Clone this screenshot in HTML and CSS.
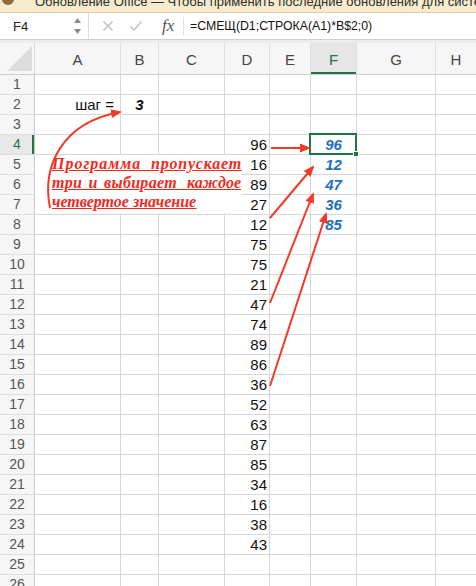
FILE: index.html
```html
<!DOCTYPE html>
<html lang="ru">
<head>
<meta charset="utf-8">
<title>Excel</title>
<link rel="stylesheet" href="styles.css">
</head>
<body>
<div class="notice"><span class="ndot"></span><span class="ntext">Обновление Office — Чтобы применить последние обновления для системы безопасности</span></div>
<div class="fbar">
  <div class="namebox">
    <span class="nametext">F4</span>
    <svg class="spin" width="9" height="18" viewBox="0 0 9 18"><path d="M1 6 L4.5 1 L8 6 Z" fill="#8a8a8a"/><path d="M1 12 L4.5 17 L8 12 Z" fill="#8a8a8a"/></svg>
  </div>
  <div class="ficons">
    <svg width="12" height="12" viewBox="0 0 12 12"><path d="M1.5 1.5 L10.5 10.5 M10.5 1.5 L1.5 10.5" stroke="#c4c4c4" stroke-width="1.6" fill="none"/></svg>
    <svg width="14" height="12" viewBox="0 0 14 12"><path d="M1.5 6.5 L5 10 L12.5 1.5" stroke="#c4c4c4" stroke-width="1.6" fill="none"/></svg>
    <span class="fx">fx</span>
  </div>
  <div class="formula">=СМЕЩ(D1;СТРОКА(А1)*B$2;0)</div>
</div>
<div class="gap"></div>
<div class="sheet">
  <div class="corner"><svg width="34" height="31" viewBox="0 0 34 31"><path d="M7 28 L32 3 L32 28 Z" fill="#dcdcdc"/></svg></div>
  <div class="ch">A</div><div class="ch">B</div><div class="ch">C</div><div class="ch">D</div><div class="ch">E</div><div class="ch selc">F</div><div class="ch">G</div><div class="ch">H</div>

  <div class="rh">1</div><div class="c"></div><div class="c"></div><div class="c"></div><div class="c"></div><div class="c"></div><div class="c"></div><div class="c"></div><div class="c"></div>
  <div class="rh">2</div><div class="c n step">шаг =</div><div class="c k">3</div><div class="c"></div><div class="c"></div><div class="c"></div><div class="c"></div><div class="c"></div><div class="c"></div>
  <div class="rh">3</div><div class="c"></div><div class="c"></div><div class="c"></div><div class="c"></div><div class="c"></div><div class="c"></div><div class="c"></div><div class="c"></div>
  <div class="rh selr">4</div><div class="c"></div><div class="c"></div><div class="c"></div><div class="c n">96</div><div class="c"></div><div class="c f">96</div><div class="c"></div><div class="c"></div>
  <div class="rh">5</div><div class="c"></div><div class="c"></div><div class="c"></div><div class="c n">16</div><div class="c"></div><div class="c f">12</div><div class="c"></div><div class="c"></div>
  <div class="rh">6</div><div class="c"></div><div class="c"></div><div class="c"></div><div class="c n">89</div><div class="c"></div><div class="c f">47</div><div class="c"></div><div class="c"></div>
  <div class="rh">7</div><div class="c"></div><div class="c"></div><div class="c"></div><div class="c n">27</div><div class="c"></div><div class="c f">36</div><div class="c"></div><div class="c"></div>
  <div class="rh">8</div><div class="c"></div><div class="c"></div><div class="c"></div><div class="c n">12</div><div class="c"></div><div class="c f">85</div><div class="c"></div><div class="c"></div>
  <div class="rh">9</div><div class="c"></div><div class="c"></div><div class="c"></div><div class="c n">75</div><div class="c"></div><div class="c"></div><div class="c"></div><div class="c"></div>
  <div class="rh">10</div><div class="c"></div><div class="c"></div><div class="c"></div><div class="c n">75</div><div class="c"></div><div class="c"></div><div class="c"></div><div class="c"></div>
  <div class="rh">11</div><div class="c"></div><div class="c"></div><div class="c"></div><div class="c n">21</div><div class="c"></div><div class="c"></div><div class="c"></div><div class="c"></div>
  <div class="rh">12</div><div class="c"></div><div class="c"></div><div class="c"></div><div class="c n">47</div><div class="c"></div><div class="c"></div><div class="c"></div><div class="c"></div>
  <div class="rh">13</div><div class="c"></div><div class="c"></div><div class="c"></div><div class="c n">74</div><div class="c"></div><div class="c"></div><div class="c"></div><div class="c"></div>
  <div class="rh">14</div><div class="c"></div><div class="c"></div><div class="c"></div><div class="c n">89</div><div class="c"></div><div class="c"></div><div class="c"></div><div class="c"></div>
  <div class="rh">15</div><div class="c"></div><div class="c"></div><div class="c"></div><div class="c n">86</div><div class="c"></div><div class="c"></div><div class="c"></div><div class="c"></div>
  <div class="rh">16</div><div class="c"></div><div class="c"></div><div class="c"></div><div class="c n">36</div><div class="c"></div><div class="c"></div><div class="c"></div><div class="c"></div>
  <div class="rh">17</div><div class="c"></div><div class="c"></div><div class="c"></div><div class="c n">52</div><div class="c"></div><div class="c"></div><div class="c"></div><div class="c"></div>
  <div class="rh">18</div><div class="c"></div><div class="c"></div><div class="c"></div><div class="c n">63</div><div class="c"></div><div class="c"></div><div class="c"></div><div class="c"></div>
  <div class="rh">19</div><div class="c"></div><div class="c"></div><div class="c"></div><div class="c n">87</div><div class="c"></div><div class="c"></div><div class="c"></div><div class="c"></div>
  <div class="rh">20</div><div class="c"></div><div class="c"></div><div class="c"></div><div class="c n">85</div><div class="c"></div><div class="c"></div><div class="c"></div><div class="c"></div>
  <div class="rh">21</div><div class="c"></div><div class="c"></div><div class="c"></div><div class="c n">34</div><div class="c"></div><div class="c"></div><div class="c"></div><div class="c"></div>
  <div class="rh">22</div><div class="c"></div><div class="c"></div><div class="c"></div><div class="c n">16</div><div class="c"></div><div class="c"></div><div class="c"></div><div class="c"></div>
  <div class="rh">23</div><div class="c"></div><div class="c"></div><div class="c"></div><div class="c n">38</div><div class="c"></div><div class="c"></div><div class="c"></div><div class="c"></div>
  <div class="rh">24</div><div class="c"></div><div class="c"></div><div class="c"></div><div class="c n">43</div><div class="c"></div><div class="c"></div><div class="c"></div><div class="c"></div>
  <div class="rh">25</div><div class="c"></div><div class="c"></div><div class="c"></div><div class="c"></div><div class="c"></div><div class="c"></div><div class="c"></div><div class="c"></div>
  <div class="rh">26</div><div class="c"></div><div class="c"></div><div class="c"></div><div class="c"></div><div class="c"></div><div class="c"></div><div class="c"></div><div class="c"></div>
</div>

<div class="selbox"></div>
<div class="handle"></div>

<div class="note">
  <div class="nline wide"><span>Программа</span><span class="fill">                                        </span><span>пропускает</span></div>
  <div class="nline"><span class="spaced">три и выбирает</span><span class="fill">                                        </span><span>каждое</span></div>
  <div class="nline"><span>четвертое значение</span></div>
</div>

<svg class="arrows" width="476" height="586" viewBox="0 0 476 586">
  <defs>
    <marker id="ah" markerWidth="11" markerHeight="9" refX="9" refY="4.5" orient="auto" markerUnits="userSpaceOnUse">
      <path d="M0 0 L11 4.5 L0 9 Z" fill="#f23a2a"/>
    </marker>
  </defs>
  <g stroke="#f23a2a" stroke-width="2" fill="none" marker-end="url(#ah)">
    <path d="M50 208 C 42 168, 60 123, 120 112"/>
    <path d="M271 148 L309 148"/>
    <path d="M270 218 L313 167"/>
    <path d="M270 303 L313 194"/>
    <path d="M270 386 L326 214"/>
  </g>
</svg>
</body>
</html>
```

FILE: styles.css
```css
* { box-sizing: border-box; }
html, body { margin: 0; padding: 0; }
body {
  width: 476px;
  height: 586px;
  overflow: hidden;
  position: relative;
  background: #ffffff;
  font-family: "Liberation Sans", Arial, sans-serif;
}

.notice {
  height: 13px;
  background: #f6eccd;
  border-bottom: 1px solid #d9cfae;
  overflow: hidden;
  position: relative;
  white-space: nowrap;
}
.ndot {
  position: absolute;
  left: 2px;
  top: -7px;
  width: 12px;
  height: 12px;
  border-radius: 50%;
  background: #8c6a3c;
}
.ntext {
  position: absolute;
  left: 35px;
  top: -5px;
  font-size: 13px;
  line-height: 14px;
  color: #2e2e2e;
}

.fbar {
  height: 27px;
  display: flex;
  align-items: stretch;
  background: #fff;
  border-bottom: 1px solid #cfcfcf;
}
.namebox {
  width: 89px;
  display: flex;
  align-items: center;
  justify-content: space-between;
  padding: 0 6px 0 13px;
  border-right: 1px solid #dedede;
}
.nametext { font-size: 13px; color: #222; }
.ficons {
  width: 95px;
  display: flex;
  align-items: center;
  gap: 15px;
  padding-left: 13px;
  border-right: 1px solid #e2e2e2;
  margin: 4px 0;
}
.fx {
  font-family: "Liberation Serif", "Times New Roman", serif;
  font-style: italic;
  font-size: 17px;
  color: #555;
  margin-left: 4px;
}
.formula {
  padding-left: 6px;
  display: flex;
  align-items: center;
  font-size: 12.3px;
  color: #111;
  white-space: nowrap;
}

.gap { height: 3px; background: #ececec; }

.sheet {
  display: grid;
  grid-template-columns: 35px 86px 38px 66px 45px 41px 46px 79px 41px;
  grid-template-rows: 32px;
  grid-auto-rows: 20px;
}
.corner {
  background: #f6f6f6;
  border-right: 1px solid #dadada;
  border-bottom: 1px solid #cfcfcf;
}
.corner svg { display: block; }
.ch {
  background: #f6f6f6;
  border-right: 1px solid #dedede;
  border-bottom: 1px solid #cfcfcf;
  display: flex;
  align-items: center;
  justify-content: center;
  font-size: 15px;
  color: #454545;
  padding-top: 1px;
}
.ch.selc {
  background: #e6e6e6;
  color: #217346;
  box-shadow: inset 0 -2px 0 #217346;
}
.rh {
  background: #f6f6f6;
  border-right: 1px solid #c9c9c9;
  border-bottom: 1px solid #dedede;
  text-align: center;
  font-size: 14px;
  line-height: 19px;
  color: #555;
}
.rh.selr {
  background: #e8e8e8;
  color: #217346;
  box-shadow: inset -2px 0 0 #217346;
}
.c {
  border-right: 1px solid #d6d6d6;
  border-bottom: 1px solid #d6d6d6;
  font-size: 15px;
  line-height: 19px;
  color: #111;
  white-space: nowrap;
}
.n { text-align: right; padding-right: 2px; }
.step { padding-right: 6px; }
.k { text-align: center; font-weight: bold; font-style: italic; }
.f {
  text-align: center;
  font-weight: bold;
  font-style: italic;
  color: #1f6fc0;
}

.selbox {
  position: absolute;
  left: 309px;
  top: 133px;
  width: 48px;
  height: 22px;
  border: 2px solid #217346;
}
.handle {
  position: absolute;
  left: 353px;
  top: 151px;
  width: 6px;
  height: 6px;
  background: #217346;
  border: 1px solid #fff;
}

.note {
  position: absolute;
  left: 35px;
  top: 155px;
  width: 206px;
  height: 58px;
  background: #fff;
  padding: 0 0 0 17px;
  font-family: "Liberation Serif", "Times New Roman", serif;
  font-weight: bold;
  font-style: italic;
  font-size: 16px;
  line-height: 19px;
  color: #f2291c;
  text-decoration: underline;
}
.nline {
  display: flex;
  white-space: nowrap;
  margin-top: -1px;
  margin-bottom: 1px;
  text-decoration: underline;
}
.nline span { text-decoration: underline; }
.nline.wide span { letter-spacing: 1px; }
.nline.wide span:last-child { letter-spacing: 0.8px; margin-right: -1px; }
.nline .spaced { word-spacing: 2px; letter-spacing: 0.3px; }
.fill {
  flex: 1;
  min-width: 0;
  overflow: hidden;
  white-space: pre;
  letter-spacing: 0;
}

.arrows {
  position: absolute;
  left: 0;
  top: 0;
  pointer-events: none;
}
```
